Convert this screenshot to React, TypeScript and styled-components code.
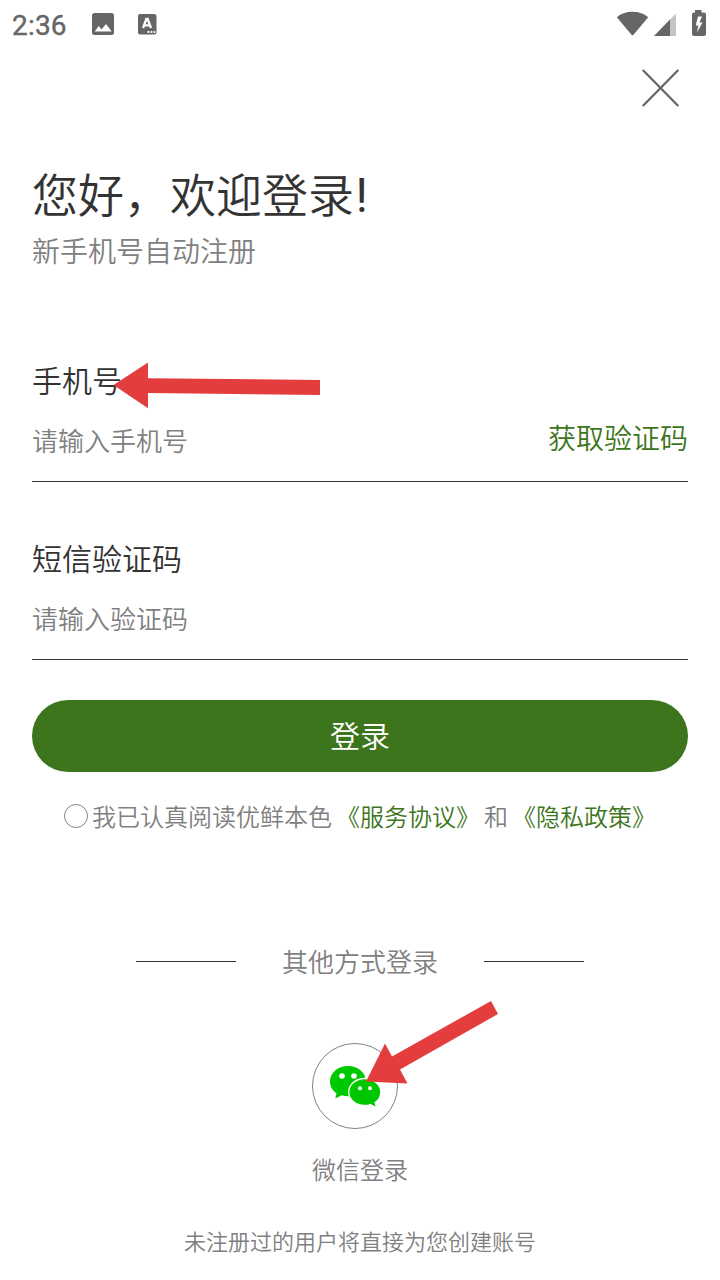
import React from "react";
import styled, { createGlobalStyle } from "styled-components";

const GlobalStyle = createGlobalStyle`
  * { box-sizing: border-box; }
  body {
    margin: 0;
    background: #fff;
    font-family: "Noto Sans CJK SC DemiLight", "Noto Sans CJK SC", "Noto Sans", sans-serif;
    font-weight: 350;
    color: #333;
  }
`;

const Screen = styled.div`
  width: 720px;
  height: 1280px;
  position: relative;
  overflow: hidden;
  display: flex;
  flex-direction: column;
  background: #fff;
`;

const StatusBar = styled.header`
  height: 48px;
  display: flex;
  align-items: center;
  padding: 0 12px;
  justify-content: space-between;
`;

const StatusGroup = styled.div<{ $wide?: boolean }>`
  display: flex;
  align-items: center;
  height: 48px;
  margin-right: ${(p) => (p.$wide ? "0" : "-12px")};
`;

const Clock = styled.span`
  width: 78px;
  padding-top: 3px;
  font: 400 28px/48px Roboto, sans-serif;
  -webkit-text-stroke: 0.4px #666;
  letter-spacing: 0.2px;
  color: #666;
`;

const CloseRow = styled.div`
  height: 80px;
  display: flex;
  justify-content: flex-end;
  padding: 20px 40px 0 0;
`;

const CloseButton = styled.button`
  width: 40px;
  height: 40px;
  border: 0;
  padding: 0;
  background: none;
  display: block;
`;

const Content = styled.main`
  padding: 0 32px;
  display: flex;
  flex-direction: column;
`;

const Title = styled.h1`
  margin: 31px 0 0;
  height: 66px;
  font-weight: 350;
  font-size: 46px;
  line-height: 66px;
`;

const Bang = styled.span`
  margin-left: 1.5px;
  font-family: Roboto, sans-serif;
  font-size: 48px;
  font-weight: 400;
  line-height: 40px;
`;

const Subtitle = styled.p`
  margin: 5px 0 0;
  font-size: 28px;
  line-height: 40px;
  color: #808080;
`;

const Field = styled.section<{ $top: number }>`
  margin-top: ${(p) => p.$top}px;
  height: 123px;
  border-bottom: 1px solid #333;
`;

const Label = styled.label`
  display: block;
  font-size: 30px;
  line-height: 40px;
`;

const InputRow = styled.div`
  display: flex;
  justify-content: space-between;
  margin-top: 21px;
  height: 40px;
`;

const Placeholder = styled.span`
  font-size: 26px;
  line-height: 40px;
  color: #808080;
`;

const CodeLink = styled.span`
  font-size: 28px;
  line-height: 34px;
  color: #3d751c;
`;

const LoginButton = styled.button`
  margin: 40px 0 0;
  height: 72px;
  border: 0;
  border-radius: 36px;
  padding: 0 0 4px;
  background: #3d751c;
  color: #fff;
  font-family: inherit;
  font-weight: inherit;
  font-size: 30px;
  line-height: 68px;
`;

const Agreement = styled.div`
  margin-top: 26px;
  height: 36px;
  display: flex;
  align-items: center;
  justify-content: center;
  gap: 4px;
  font-size: 24px;
  line-height: 36px;
  color: #808080;
  white-space: nowrap;
`;

const Radio = styled.span`
  width: 24px;
  height: 24px;
  border: 1px solid #808080;
  border-radius: 50%;
`;

const Policy = styled.span`
  color: #3d751c;
`;

const Divider = styled.div`
  margin-top: 107px;
  height: 40px;
  display: flex;
  align-items: center;
  justify-content: center;
  gap: 46px;
  font-size: 26px;
  line-height: 40px;
  color: #808080;
`;

const Rule = styled.i`
  width: 100px;
  height: 1px;
  background: #333;
`;

const WechatLogin = styled.div`
  margin-top: 62px;
  display: flex;
  flex-direction: column;
  align-items: center;
  font-size: 24px;
  line-height: 36px;
  color: #808080;
`;

const WechatCircle = styled.div`
  width: 86px;
  height: 86px;
  margin: 0 10px 22px 0;
  border: 1px solid #808080;
  border-radius: 50%;
`;

const Footnote = styled.p`
  margin: 35px 0 0;
  text-align: center;
  font-size: 22px;
  line-height: 36px;
  color: #808080;
`;

const Annotations = styled.svg`
  position: absolute;
  inset: 0;
  pointer-events: none;
`;

const Glyph = styled.svg`
  display: block;
`;

export default function App() {
  return (
    <>
      <GlobalStyle />
      <Screen>
        <StatusBar>
          <StatusGroup $wide>
            <Clock>2:36</Clock>
            <Glyph width="80" height="48" fill="#666">
              <path fillRule="evenodd" d="M4.500 13h17a2.500 2.500 0 0 1 2.500 2.500v17a2.500 2.500 0 0 1-2.500 2.500h-17a2.500 2.500 0 0 1-2.500-2.500v-17A2.500 2.500 0 0 1 4.500 13zM4.700 31.500h17l-5.700-7.600-4.400 5.600-2.900-3.500z" />
              <rect x="48" y="14" width="18.500" height="20.500" rx="2" />
              <path d="M53 28 56.400 19h1.200l3.400 9M54.500 25.300h5" fill="none" stroke="#fff" strokeWidth="2.300" />
              <path d="M57.500 31h1.800v2h-1.800zm3.100 0h1.800v2h-1.800zm3.100 0h1.600v2h-1.600z" fill="#fff" />
            </Glyph>
          </StatusGroup>
          <StatusGroup>
            <Glyph width="104" height="48" fill="#666">
              <path d="M.8 17.300Q7 11.800 16.500 11.800T32.200 17.300L17.500 34.800Q16.500 35.900 15.500 34.800z" />
              <path d="M60 13.500V36H38z" fill="#c4c4c4" />
              <path d="M54 19.500V36H38z" />
              <path fillRule="evenodd" d="M79 10h6.500v2.500h2.500a2 2 0 0 1 2 2V34a2 2 0 0 1-2 2H78a2 2 0 0 1-2-2V14.500a2 2 0 0 1 2-2h1zM82 16.500 79.700 25.500H82.300L81 32.500 86.500 22.500H83.500L86 16.500z" />
            </Glyph>
          </StatusGroup>
        </StatusBar>
        <CloseRow>
          <CloseButton aria-label="关闭">
            <Glyph width="40" height="40" fill="none" stroke="#666" strokeWidth="2.300">
              <path d="M2.800 2 38.300 38M38.300 2 2.800 38" />
            </Glyph>
          </CloseButton>
        </CloseRow>
        <Content>
          <Title>您好，欢迎登录<Bang>!</Bang></Title>
          <Subtitle>新手机号自动注册</Subtitle>
          <Field $top={89}>
            <Label>手机号</Label>
            <InputRow>
              <Placeholder>请输入手机号</Placeholder>
              <CodeLink>获取验证码</CodeLink>
            </InputRow>
          </Field>
          <Field $top={55}>
            <Label>短信验证码</Label>
            <InputRow>
              <Placeholder>请输入验证码</Placeholder>
            </InputRow>
          </Field>
          <LoginButton>登录</LoginButton>
          <Agreement>
            <Radio />
            <span>我已认真阅读优鲜本色</span>
            <Policy>《服务协议》</Policy>
            <span>和</span>
            <Policy>《隐私政策》</Policy>
          </Agreement>
          <Divider>
            <Rule />
            <span>其他方式登录</span>
            <Rule />
          </Divider>
          <WechatLogin>
            <WechatCircle>
              <Glyph width="84" height="84" fill="#00c800">
                <path d="M35 22C25 22 17 28.700 17 37.500c0 5 2.600 9 6.500 11.800l-1.200 5.200 6.500-3.200c2 .7 4 1 6.200 1 10 0 18-6.500 18-15S45 22 35 22z" />
                <circle cx="29" cy="32" r="2.800" fill="#fff" />
                <circle cx="41" cy="32" r="2.800" fill="#fff" />
                <path d="M51.700 34.500c-9 0-16 6-16 13.500s7 13.500 16 13.500c2 0 4-.3 5.800-.9l6 3-1.300-5c3.600-2.500 5.600-6.300 5.600-10.600C67.800 40.500 60.500 34.500 51.700 34.500z" stroke="#fff" strokeWidth="1.300" />
                <circle cx="47" cy="44.300" r="2" fill="#fff" />
                <circle cx="57" cy="44.300" r="2" fill="#fff" />
              </Glyph>
            </WechatCircle>
            <span>微信登录</span>
          </WechatLogin>
          <Footnote>未注册过的用户将直接为您创建账号</Footnote>
        </Content>
        <Annotations width="720" height="1280" fill="#e43d3d">
          <path d="M113.500 385 148 362.500V378.200L320 380V395L148 393V408.300z" />
          <path d="M366 1081.500 385 1043.500 392 1056.500 491 1001 498 1014 400 1069.500 407.500 1083.500z" />
        </Annotations>
      </Screen>
    </>
  );
}
